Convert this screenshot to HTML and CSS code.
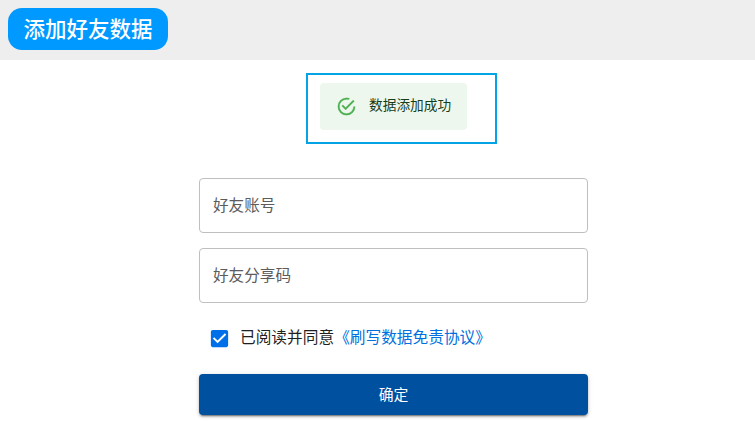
FILE: index.html
```html
<!DOCTYPE html>
<html lang="zh-CN">
<head>
<meta charset="utf-8">
<title>添加好友数据</title>
<link rel="stylesheet" href="styles.css">
</head>
<body>
<header class="topbar"><h1 class="title">添加好友数据</h1></header>
<main class="page">
  <div class="highlight">
    <div class="alert" role="status">
      <svg class="alert-icon" viewBox="0 0 24 24" aria-hidden="true"><path d="M20,12A8,8 0 0,1 12,20A8,8 0 0,1 4,12A8,8 0 0,1 12,4C12.76,4 13.5,4.11 14.2,4.31L15.77,2.74C14.61,2.26 13.34,2 12,2A10,10 0 0,0 2,12A10,10 0 0,0 12,22A10,10 0 0,0 22,12M7.91,10.08L6.5,11.5L11,16L21,6L19.59,4.58L11,13.17L7.91,10.08Z"/></svg>
      <span class="alert-text">数据添加成功</span>
    </div>
  </div>
  <form class="form">
    <div class="field">好友账号</div>
    <div class="field">好友分享码</div>
    <div class="agree">
      <svg class="checkbox" viewBox="0 0 24 24" aria-hidden="true"><path d="M19 3H5c-1.11 0-2 .9-2 2v14c0 1.1.89 2 2 2h14c1.11 0 2-.9 2-2V5c0-1.1-.89-2-2-2zm-9 14l-5-5 1.41-1.41L10 14.17l7.59-7.59L19 8l-9 9z"/></svg>
      <span class="agree-text">已阅读并同意<a class="link">《刷写数据免责协议》</a></span>
    </div>
    <button class="submit" type="button">确定</button>
  </form>
</main>
</body>
</html>
```
FILE: styles.css
```css
* { box-sizing: border-box; }
body {
  margin: 0;
  height: 421px;
  overflow: hidden;
  background: #fff;
  color: #1f1f1f;
  font-family: "Noto Sans CJK SC", sans-serif;
}
.topbar {
  height: 60px;
  padding: 8px;
  background: #eee;
}
.title {
  width: 160px;
  height: 41.5px;
  margin: 0;
  border-radius: 14px;
  background: #0099ff;
  color: #fff;
  font-size: 21.5px;
  font-weight: 500;
  line-height: 39px;
  text-align: center;
}
.page {
  width: 389px;
  margin-left: 199px;
  padding-top: 13px;
}
.highlight {
  width: 191px;
  height: 71px;
  margin-left: 107px;
  padding: 8px 12px;
  border: 2px solid #04a3e6;
}
.alert {
  display: flex;
  align-items: center;
  gap: 12px;
  width: 147px;
  height: 47px;
  padding-left: 16px;
  border-radius: 4px;
  background: #edf7ed;
  color: #163d19;
  font-size: 13.7px;
  font-weight: 400;
  white-space: nowrap;
}
.alert-icon { width: 21px; height: 21px; fill: #4caf50; stroke: #4caf50; stroke-width: .2; }
.alert-text { padding-bottom: 5px; }
.form { margin-top: 34px; }
.field {
  height: 55px;
  margin-bottom: 15px;
  padding-left: 13px;
  border: 1px solid #bfbfbf;
  border-radius: 4px;
  color: #5c5c5c;
  font-size: 15.6px;
  line-height: 50px;
}
.agree {
  display: flex;
  align-items: center;
  height: 41px;
  padding-left: 9px;
}
.checkbox { width: 23px; height: 23px; fill: #0070e8; }
.agree-text { margin-left: 9px; padding-bottom: 5px; font-size: 15.7px; white-space: nowrap; }
.link { color: #0070e0; }
.submit {
  display: block;
  width: 389px;
  height: 41px;
  margin-top: 15px;
  padding: 0 0 2px;
  border: 0;
  border-radius: 4px;
  background: #0050a0;
  color: #fff;
  font: 400 14.8px/38px "Noto Sans CJK SC", sans-serif;
  box-shadow: 0 3px 1px -2px rgba(0,0,0,.3), 0 2px 2px rgba(0,0,0,.2), 0 1px 5px rgba(0,0,0,.16);
}
```
